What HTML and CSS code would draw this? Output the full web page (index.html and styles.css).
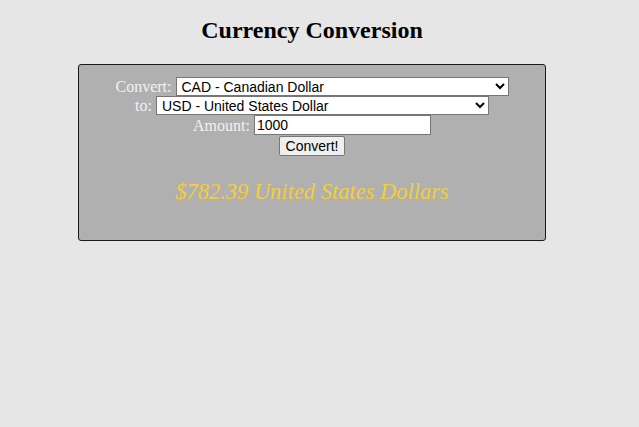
FILE: index.html
```html
<!DOCTYPE html>
<html>
<head>
<meta charset="utf-8">
<link rel="stylesheet" href="styles.css">
</head>
<body>
<div class="page">
  <h1 class="title">Currency Conversion</h1>
  <div class="box">
    <div class="row">
      <span class="label">Convert:</span>
      <select class="sel">
        <option>CAD - Canadian Dollar</option>
      </select>
    </div>
    <div class="row">
      <span class="label">to:</span>
      <select class="sel">
        <option>USD - United States Dollar</option>
      </select>
    </div>
    <div class="row row-input">
      <span class="label">Amount:</span>
      <input class="amount" type="text" value="1000">
    </div>
    <div class="row row-btn">
      <button class="btn">Convert!</button>
    </div>
    <div class="result">$782.39 United States Dollars</div>
  </div>
</div>
</body>
</html>
```
FILE: styles.css
```css
html, body {
  margin: 0;
  padding: 0;
  background: #e6e6e6;
}
.page {
  width: 626px;
  font-family: "Liberation Serif", "Times New Roman", serif;
}
.title {
  width: 624px;
  margin: 16px 0 20px;
  font-size: 24px;
  line-height: 28px;
  font-weight: bold;
  text-align: center;
  color: #000;
}
.box {
  width: 466px;
  margin-left: 78px;
  height: 163px;
  padding-top: 12px;
  background: #b0b0b0;
  border: 1px solid #1a1a1a;
  border-radius: 3px;
}
.row {
  display: flex;
  justify-content: center;
  align-items: center;
  gap: 4px;
  height: 19px;
}
.row-input {
  height: 20px;
}
.row-btn {
  margin-top: 1px;
  height: 20px;
}
.label {
  color: #f2f2f2;
  font-size: 16px;
  line-height: 19px;
}
.sel {
  width: 333px;
  height: 19px;
  box-sizing: border-box;
  border: 1px solid #767676;
  border-radius: 0;
  background: #fff;
  font-family: "Liberation Sans", Arial, sans-serif;
  font-size: 14px;
  padding: 0 0 0 1px;
  color: #000;
}
.amount {
  width: 177px;
  height: 20px;
  box-sizing: border-box;
  border: 1px solid #767676;
  border-radius: 0;
  background: #fff;
  font-family: "Liberation Sans", Arial, sans-serif;
  font-size: 14px;
  padding: 0 2px;
  margin: 0;
  color: #000;
}
.btn {
  width: 66px;
  height: 20px;
  box-sizing: border-box;
  border: 1px solid #767676;
  border-radius: 2px;
  background: #efefef;
  font-family: "Liberation Sans", Arial, sans-serif;
  font-size: 14px;
  padding: 0;
  color: #000;
}
.result {
  margin-top: 23px;
  text-align: center;
  font-style: italic;
  font-size: 22.5px;
  line-height: 26px;
  color: #f5cd3a;
}
```
